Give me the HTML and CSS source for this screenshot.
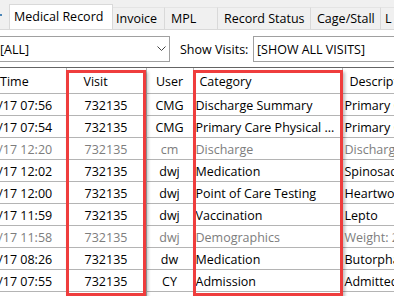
FILE: index.html
```html
<!DOCTYPE html>
<html lang="en">
<head>
  <meta charset="UTF-8">
  <title>Medical Record</title>
  <link rel="stylesheet" href="styles.css">
</head>
<body>

<div class="tabs">
  <div class="tab-lead"><span class="tab-dot"></span></div>
  <div class="tab active">Medical Record</div>
  <div class="tab tab-invoice">Invoice</div>
  <div class="tab tab-mpl">MPL</div>
  <div class="tab tab-status">Record Status</div>
  <div class="tab tab-cage">Cage/Stall</div>
  <div class="tab tab-more">L</div>
</div>

<div class="toolbar">
  <div class="combo combo-type">
    <span>[ALL]</span>
    <svg class="chevron" width="9" height="6" viewBox="0 0 9 6">
      <polyline points="0.5,0.5 4.5,4.5 8.5,0.5" fill="none" stroke="#444" stroke-width="1"/>
    </svg>
  </div>
  <span class="label">Show Visits:</span>
  <div class="combo combo-visits"><span>[SHOW ALL VISITS]</span></div>
</div>

<div class="grid">
  <table>
    <colgroup>
      <col class="c-time">
      <col class="c-visit">
      <col class="c-user">
      <col class="c-cat">
      <col class="c-desc">
    </colgroup>
    <thead>
      <tr>
        <th class="time">Date/Time</th>
        <th class="visit">Visit</th>
        <th class="user">User</th>
        <th class="cat">Category</th>
        <th class="desc">Description</th>
      </tr>
    </thead>
    <tbody>
      <tr>
        <td class="time">10/17/17 07:56</td><td class="visit">732135</td><td class="user">CMG</td>
        <td class="cat">Discharge Summary</td><td class="desc">Primary Care Discharge</td>
      </tr>
      <tr>
        <td class="time">10/17/17 07:54</td><td class="visit">732135</td><td class="user">CMG</td>
        <td class="cat">Primary Care Physical ...</td><td class="desc">Primary Care Physical Exam</td>
      </tr>
      <tr class="dim">
        <td class="time">10/16/17 12:20</td><td class="visit">732135</td><td class="user">cm</td>
        <td class="cat">Discharge</td><td class="desc">Discharged</td>
      </tr>
      <tr>
        <td class="time">10/16/17 12:02</td><td class="visit">732135</td><td class="user">dwj</td>
        <td class="cat">Medication</td><td class="desc">Spinosad</td>
      </tr>
      <tr>
        <td class="time">10/16/17 12:00</td><td class="visit">732135</td><td class="user">dwj</td>
        <td class="cat">Point of Care Testing</td><td class="desc">Heartworm</td>
      </tr>
      <tr>
        <td class="time">10/16/17 11:59</td><td class="visit">732135</td><td class="user">dwj</td>
        <td class="cat">Vaccination</td><td class="desc">Lepto</td>
      </tr>
      <tr class="dim">
        <td class="time">10/16/17 11:58</td><td class="visit">732135</td><td class="user">dwj</td>
        <td class="cat">Demographics</td><td class="desc">Weight: 24.2 kg</td>
      </tr>
      <tr>
        <td class="time">10/16/17 08:26</td><td class="visit">732135</td><td class="user">dw</td>
        <td class="cat">Medication</td><td class="desc">Butorphanol</td>
      </tr>
      <tr>
        <td class="time">10/16/17 07:55</td><td class="visit">732135</td><td class="user">CY</td>
        <td class="cat">Admission</td><td class="desc">Admitted</td>
      </tr>
      <tr>
        <td class="time">10/15/17 18:10</td><td class="visit">732135</td><td class="user">CY</td>
        <td class="cat">Admission</td><td class="desc">Admitted</td>
      </tr>
    </tbody>
  </table>

  <div class="mark mark-visit"></div>
  <div class="mark mark-cat"></div>
</div>

</body>
</html>
```

FILE: styles.css
```css
body {
  margin: 0;
  background: #ffffff;
  font-family: 'Open Sans', 'Noto Sans', sans-serif;
  font-size: 12.5px;
  color: #000;
  width: 394px;
  height: 296px;
  overflow: hidden;
}

/* tab strip */
.tabs {
  display: flex;
  align-items: flex-end;
  height: 30px;
  box-sizing: border-box;
  background: #f0f0f0;
  border-bottom: 1px solid #d9d9d9;
  white-space: nowrap;
}

.tabs > div {
  flex-shrink: 0;
}

.tab-lead {
  width: 9px;
  height: 25px;
  position: relative;
}

.tab-dot {
  position: absolute;
  left: 0;
  top: 10px;
  width: 2px;
  height: 2px;
  background: #4a86b8;
}

.tab {
  box-sizing: border-box;
  height: 22px;
  line-height: 21px;
  padding-left: 6px;
  border-right: 1px solid #d9d9d9;
  border-top: 1px solid #e4e4e4;
  background: #f0f0f0;
}

.tab.active {
  width: 104px;
  height: 25px;
  line-height: 23px;
  padding-left: 4px;
  background: #ffffff;
  border: 1px solid #d9d9d9;
  border-bottom: none;
}

.tab-invoice { width: 52px; padding-left: 3px; }
.tab-mpl { width: 53px; }
.tab-status { width: 93px; }
.tab-cage { width: 70px; }
.tab-more { width: 40px; padding-left: 4px; border-right: none; }

/* filter bar */
.toolbar {
  display: flex;
  align-items: center;
  height: 37px;
  padding-top: 1px;
  box-sizing: border-box;
  white-space: nowrap;
}

.toolbar > * {
  flex-shrink: 0;
}

.combo {
  box-sizing: border-box;
  height: 26px;
  border: 1px solid #a0a0a0;
  display: flex;
  align-items: center;
  background: #fff;
}

.combo-type {
  width: 175px;
  margin-left: -5px;
  padding: 0 3px 0 4px;
  justify-content: space-between;
}

.label {
  margin-left: 10px;
  width: 73px;
}

.combo-visits {
  width: 150px;
  padding-left: 3px;
}

/* records grid */
.grid {
  position: relative;
  border-top: 1px solid #646464;
  overflow: hidden;
  height: 229px;
}

table {
  border-collapse: collapse;
  table-layout: fixed;
  width: 528px;
  margin-left: -38px;
}

.c-time { width: 104px; }
.c-visit { width: 80px; }
.c-user { width: 47px; }
.c-cat { width: 149px; }
.c-desc { width: 150px; }

th, td {
  white-space: nowrap;
  overflow: hidden;
  border-right: 1px solid #b4b4b4;
  border-bottom: 1px solid #b4b4b4;
  padding: 2px 3px 0;
  text-align: left;
  font-weight: normal;
}

th {
  height: 23px;
}

td {
  height: 19px;
}

th.time { padding-left: 6px; }
th.visit { padding-left: 17px; }
th.cat { padding-left: 6px; }
th.desc { padding-left: 7px; }

td.visit, td.user, th.user { text-align: center; }

td.cat, td.desc { padding-left: 2px; }

tr.dim td {
  color: #7d7d7d;
}

/* highlight frames laid over the grid */
.mark {
  position: absolute;
  top: 2px;
  height: 226px;
  box-sizing: border-box;
  border: 3px solid #ef3d3d;
  box-shadow: 2px 2px 3px rgba(0, 0, 0, 0.25);
  pointer-events: none;
}

.mark-visit {
  left: 66px;
  width: 80px;
}

.mark-cat {
  left: 193px;
  width: 150px;
}
```
